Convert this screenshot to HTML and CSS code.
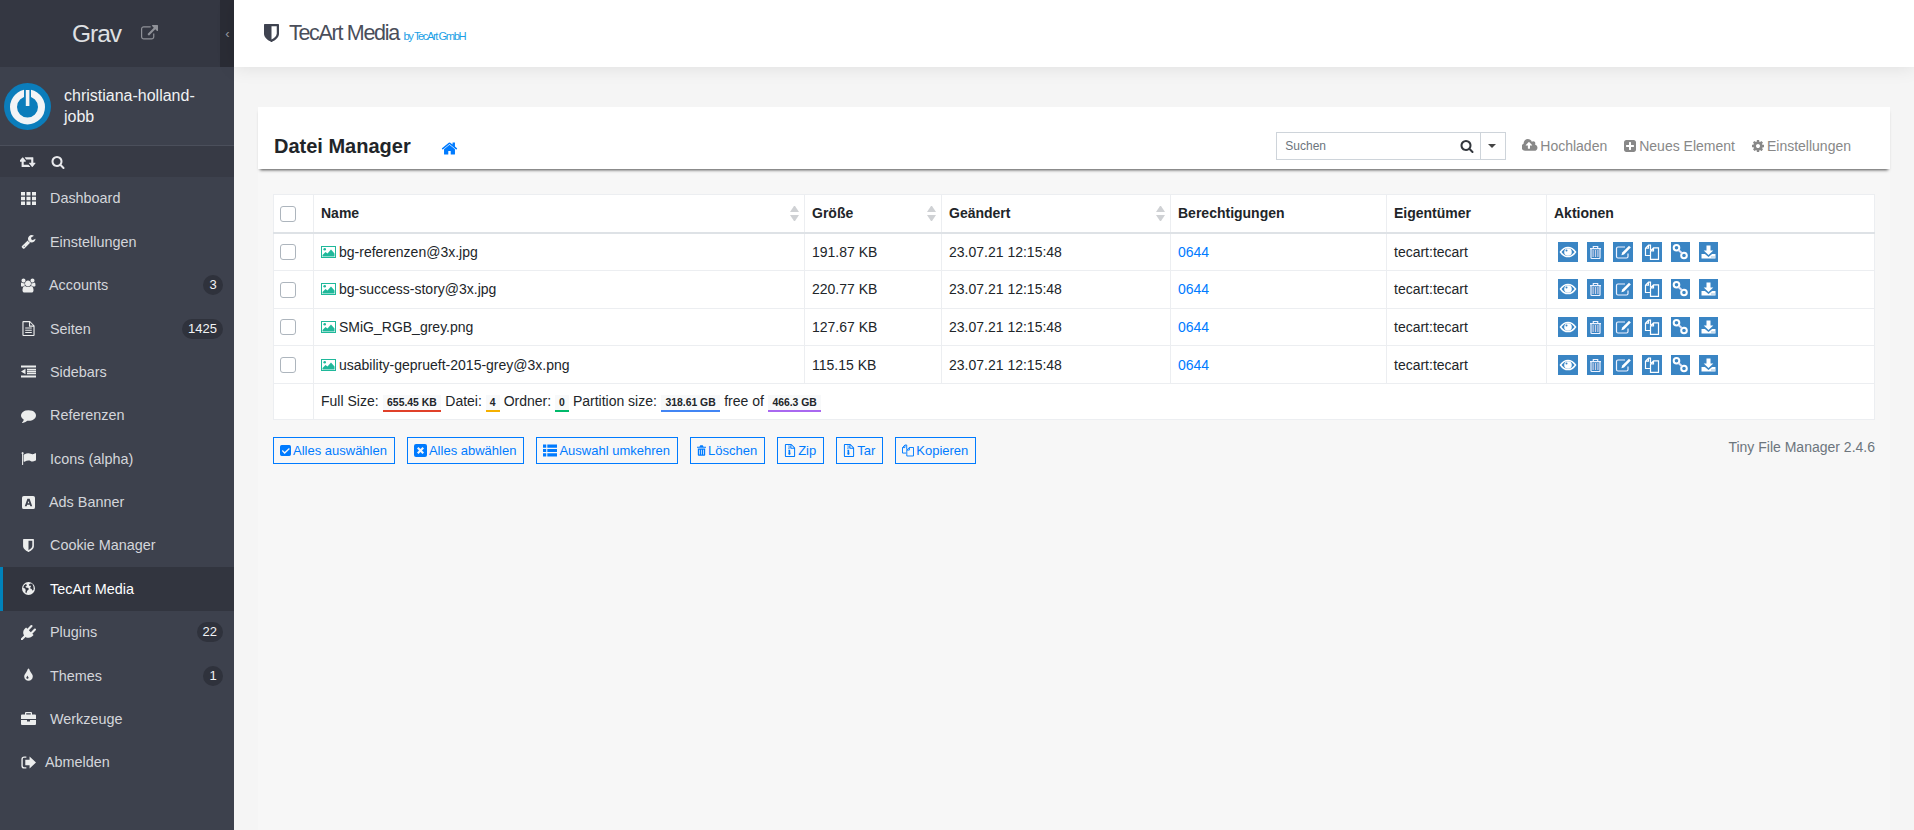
FILE: index.html
```html
<!DOCTYPE html>
<html lang="de">
<head>
<meta charset="utf-8">
<title>TecArt Media</title>
<link rel="stylesheet" href="styles.css">
</head>
<body>
<svg class="sprite" xmlns="http://www.w3.org/2000/svg">
<symbol id="i-ext" viewBox="0 0 1792 1792"><path d="M1408 928v320q0 119-84.500 203.500t-203.500 84.500h-832q-119 0-203.500-84.500t-84.500-203.500v-832q0-119 84.500-203.500t203.500-84.500h704q14 0 23 9t9 23v64q0 14-9 23t-23 9h-704q-66 0-113 47t-47 113v832q0 66 47 113t113 47h832q66 0 113-47t47-113v-320q0-14 9-23t23-9h64q14 0 23 9t9 23zm384-864v512q0 26-19 45t-45 19-45-19l-176-176-652 652q-10 10-23 10t-23-10l-114-114q-10-10-10-23t10-23l652-652-176-176q-19-19-19-45t19-45 45-19h512q26 0 45 19t19 45z"/></symbol>
<symbol id="i-shield" viewBox="256 128 1280 1536"><path d="M1344 960v-640h-448v1137q119-63 213-137 235-184 235-360zm192-768v768q0 86-33.500 170.500t-83 150-118 127.500-126.500 103-121 77.500-89.500 49.500-42.500 20q-12 6-26 6t-26-6q-16-7-42.500-20t-89.500-49.500-121-77.500-126.500-103-118-127.500-83-150-33.500-170.500v-768q0-26 19-45t45-19h1152q26 0 45 19t19 45z"/></symbol>
<symbol id="i-home" viewBox="0 0 1792 1792"><path d="M1472 992v480q0 26-19 45t-45 19h-384v-384h-256v384h-384q-26 0-45-19t-19-45v-480q0-1 .5-3t.5-3l575-474 575 474q1 2 1 6zm223-69l-62 74q-8 9-21 11h-3q-13 0-21-7l-692-577-692 577q-12 8-24 7-13-2-21-11l-62-74q-8-10-7-23.500t11-21.500l719-599q32-26 76-26t76 26l244 204v-195q0-14 9-23t23-9h192q14 0 23 9t9 23v408l219 182q10 8 11 21.500t-7 23.500z"/></symbol>
<symbol id="i-search" viewBox="0 0 1792 1792"><path d="M1216 832q0-185-131.500-316.500t-316.500-131.500-316.500 131.500-131.500 316.500 131.500 316.500 316.500 131.500 316.500-131.500 131.500-316.500zm512 832q0 52-38 90t-90 38q-54 0-90-38l-343-342q-179 124-399 124-143 0-273.500-55.500t-225-150-150-225-55.500-273.500 55.500-273.500 150-225 225-150 273.500-55.500 273.500 55.500 225 150 150 225 55.500 273.500q0 220-124 399l343 343q37 37 37 90z"/></symbol>
<symbol id="i-upload" viewBox="0 0 1920 1792"><path d="M1216 864q0-14-9-23l-352-352q-9-9-23-9t-23 9l-351 351q-10 12-10 24 0 14 9 23t23 9h224v352q0 13 9.500 22.500t22.500 9.500h192q13 0 22.500-9.500t9.500-22.500v-352h224q13 0 22.500-9.500t9.500-22.500zm640 288q0 159-112.500 271.500t-271.500 112.500h-1088q-185 0-316.500-131.500t-131.500-316.500q0-130 70-240t188-165q-2-30-2-43 0-212 150-362t362-150q156 0 285.500 87t188.500 231q71-62 166-62 106 0 181 75t75 181q0 76-41 138 130 31 213.500 135.500t83.500 238.500z"/></symbol>
<symbol id="i-plus" viewBox="0 0 1792 1792"><path d="M1408 960v-128q0-26-19-45t-45-19h-320v-320q0-26-19-45t-45-19h-128q-26 0-45 19t-19 45v320h-320q-26 0-45 19t-19 45v128q0 26 19 45t45 19h320v320q0 26 19 45t45 19h128q26 0 45-19t19-45v-320h320q26 0 45-19t19-45zm256-544v960q0 119-84.500 203.500t-203.500 84.500h-960q-119 0-203.500-84.500t-84.500-203.500v-960q0-119 84.500-203.500t203.500-84.500h960q119 0 203.500 84.500t84.500 203.500z"/></symbol>
<symbol id="i-cog" viewBox="0 0 1792 1792"><path d="M1152 896q0-106-75-181t-181-75-181 75-75 181 75 181 181 75 181-75 75-181zm512-109v222q0 12-8 23t-20 13l-185 28q-19 54-39 91 35 50 107 138 10 12 10 25t-9 23q-27 37-99 108t-94 71q-12 0-26-9l-138-108q-44 23-91 38-16 136-29 186-7 28-36 28h-222q-14 0-24.500-8.500t-11.500-21.500l-28-184q-49-16-90-37l-141 107q-10 9-25 9-14 0-25-11-126-114-165-168-7-10-7-23 0-12 8-23 15-21 51-66.500t54-70.500q-27-50-41-99l-183-27q-13-2-21-12.500t-8-23.500v-222q0-12 8-23t19-13l186-28q14-46 39-92-40-57-107-138-10-12-10-24 0-10 9-23 26-36 98.500-107.500t94.500-71.500q13 0 26 10l138 107q44-23 91-38 16-136 29-186 7-28 36-28h222q14 0 24.500 8.500t11.500 21.500l28 184q49 16 90 37l142-107q9-9 24-9 13 0 25 10 129 119 165 170 7 8 7 22 0 12-8 23-15 21-51 66.500t-54 70.500q26 50 41 98l183 28q13 2 21 12.500t8 23.500z"/></symbol>
<symbol id="i-wrench" viewBox="0 0 1792 1792"><path d="M448 1472q0-26-19-45t-45-19-45 19-19 45 19 45 45 19 45-19 19-45zm644-420l-682 682q-37 37-90 37-52 0-91-37l-106-108q-38-36-38-90 0-53 38-91l681-681q39 98 114.500 173.500t173.500 114.500zm634-435q0 39-23 106-47 134-164.500 217.500t-258.500 83.500q-185 0-316.500-131.500t-131.500-316.500 131.500-316.500 316.500-131.500q58 0 121.500 16.500t107.500 46.500q16 11 16 28t-16 28l-293 169v224l193 107q5-3 79-48.500t135.500-81 70.500-35.500q15 0 23.500 10t8.500 25z"/></symbol>
<symbol id="i-users" viewBox="0 0 1920 1792"><path d="M529 896q-162 5-265 128h-134q-82 0-138-40.500t-56-118.500q0-353 124-353 6 0 43.500 21t97.500 42.500 119 21.500q67 0 133-23-5 37-5 66 0 139 81 256zm1071 637q0 120-73 189.500t-194 69.500h-874q-121 0-194-69.500t-73-189.500q0-53 3.500-103.500t14-109 26.500-108.500 43-97.500 62-81 85.500-53.500 111.500-20q10 0 43 21.500t73 48 107 48 135 21.500 135-21.500 107-48 73-48 43-21.500q61 0 111.500 20t85.500 53.500 62 81 43 97.500 26.500 108.500 14 109 3.500 103.500zm-1024-1277q0 106-75 181t-181 75-181-75-75-181 75-181 181-75 181 75 75 181zm704 384q0 159-112.500 271.500t-271.500 112.500-271.500-112.500-112.500-271.500 112.500-271.500 271.500-112.500 271.500 112.500 112.500 271.500zm576 225q0 78-56 118.500t-138 40.500h-134q-103-123-265-128 81-117 81-256 0-29-5-66 66 23 133 23 59 0 119-21.500t97.500-42.500 43.500-21q124 0 124 353zm-128-609q0 106-75 181t-181 75-181-75-75-181 75-181 181-75 181 75 75 181z"/></symbol>
<symbol id="i-comment" viewBox="0 0 1792 1792"><path d="M1792 896q0 174-120 321.500t-326 233-450 85.500q-70 0-145-8-198 175-460 242-49 14-114 22-17 2-30.500-9t-17.500-29v-1q-3-4-.5-12t2-10 4.500-9.500l6-9 7-8.500 8-9q7-8 31-34.500t34.500-38 31-39.500 32.500-51 27-59 26-76q-157-89-247.500-220t-90.500-281q0-130 71-248.500t191-204.500 286-136.500 348-50.500q244 0 450 85.500t326 233 120 321.500z"/></symbol>
<symbol id="i-tint" viewBox="0 0 1792 1792"><path d="M896 1152q0-36-20-69-1-1-15.500-22.500t-25.500-38-25-44-21-50.500q-4-16-21-16t-21 16q-7 23-21 50.500t-25 44-25.500 38-15.500 22.500q-20 33-20 69 0 53 37.500 90.500t90.500 37.500 90.500-37.500 37.500-90.500zm512-128q0 212-150 362t-362 150-362-150-150-362q0-145 81-275 6-9 62.500-90.500t101-151 99.500-178 83-201.500q9-30 34-47t51-17 51.500 17 33.500 47q28 93 83 201.500t99.500 178 101 151 62.500 90.500q81 127 81 275z"/></symbol>
<symbol id="i-plug" viewBox="0 0 1792 1792"><path d="M1755 453q37 38 37 90.500t-37 90.500l-401 400 150 150-160 160q-163 163-389.500 186.500t-411.500-100.500l-362 362h-181v-181l362-362q-124-185-100.500-411.500t186.500-389.500l160-160 150 150 400-401q38-37 91-37t90 37 37 90.500-37 90.500l-400 401 234 234 401-400q38-37 91-37t90 37z"/></symbol>
<symbol id="i-flag" viewBox="0 0 1792 1792"><path d="M320 256q0 72-64 110v1266q0 13-9.500 22.500t-22.500 9.500h-64q-13 0-22.500-9.500t-9.500-22.500v-1266q-64-38-64-110 0-53 37.500-90.500t90.500-37.500 90.500 37.500 37.500 90.500zm1472 64v763q0 25-12.500 38.500t-39.500 27.500q-215 116-369 116-61 0-123.500-22t-108.500-48-115.500-48-142.500-22q-192 0-464 146-17 9-33 9-26 0-45-19t-19-45v-742q0-32 31-55 21-14 79-43 236-120 421-120 107 0 200 29t219 88q38 19 88 19 54 0 117.500-21t110-47 88-47 54.500-21q26 0 45 19t19 45z"/></symbol>
<symbol id="i-retweet" viewBox="0 0 1920 1792"><path d="M1216 1520q0 13-9.500 22.500t-22.500 9.500h-960q-8 0-13.500-2t-9-7-5.500-8-3-11.500-1-11.500v-600h-192q-26 0-45-19t-19-45q0-24 15-41l320-384q19-22 49-22t49 22l320 384q15 17 15 41 0 26-19 45t-45 19h-192v384h576q16 0 25 11l160 192q7 10 7 21zm640-416q0 24-15 41l-320 384q-20 23-49 23t-49-23l-320-384q-15-17-15-41 0-26 19-45t45-19h192v-384h-576q-16 0-25-12l-160-192q-7-9-7-20 0-13 9.500-22.500t22.500-9.500h960q8 0 13.500 2t9 7 5.500 8 3 11.500 1 11.500v600h192q26 0 45 19t19 45z"/></symbol>
<symbol id="i-th" viewBox="0 0 15 13"><path d="M0 0h4v3.500H0zM5.500 0h4v3.500h-4zM11 0h4v3.500h-4zM0 4.750h4v3.500H0zM5.500 4.750h4v3.500h-4zM11 4.750h4v3.500h-4zM0 9.500h4V13H0zM5.500 9.500h4V13h-4zM11 9.500h4V13h-4z"/></symbol>
<symbol id="i-file" viewBox="0 0 13 16"><path fill-rule="evenodd" d="M1 0h7l5 5v10a1 1 0 0 1-1 1H1a1 1 0 0 1-1-1V1a1 1 0 0 1 1-1zm.2 1.200v13.600h10.600V6H7V1.200zM8.200 1.600V4.800h3.200zM3 7h7v1.100H3zM3 9.300h7v1.100H3zM3 11.600h7v1.100H3z"/></symbol>
<symbol id="i-sidebars" viewBox="0 0 15 12"><path d="M0 0h15v2H0zM0 10h15v2H0zM6 3.300h9v1.400H6zM6 5.300h9v1.400H6zM6 7.300h9v1.400H6zM4.500 3.200v5.600L0 6z"/></symbol>
<symbol id="i-ads" viewBox="0 0 14 14"><path fill-rule="evenodd" d="M2 0h10a2 2 0 0 1 2 2v10a2 2 0 0 1-2 2H2a2 2 0 0 1-2-2V2a2 2 0 0 1 2-2zm3.800 3L3 11h2l.5-1.600h3L9 11h2L8.200 3zM7 5.300l.9 2.600H6.100z"/></symbol>
<symbol id="i-globe" viewBox="0 0 14 14"><path fill-rule="evenodd" d="M7 0a7 7 0 1 1 0 14A7 7 0 0 1 7 0zM4.500 1.800L2 3.800l-.6 2.700 2 .6.600 1.700-.4 2.300 1.100 1 .9-2.800 1.600-1.200-.2-1.700L4.300 6l-.6-1.300 1.500-.4zM9 1.500L7.200 3l1.200 1.300 1-.5.200 1.600L8.400 6.500l1.900 1.100 1.300 1.900.9-1.500-.1-3-1.300-3.100z"/></symbol>
<symbol id="i-brief" viewBox="0 0 15 13"><path fill-rule="evenodd" d="M5 0h5a1 1 0 0 1 1 1v1.500h3a1 1 0 0 1 1 1V7H0V3.500a1 1 0 0 1 1-1h3V1a1 1 0 0 1 1-1zm.2 1.200v1.300h4.600V1.200zM0 8h6v1.500h3V8h6v4a1 1 0 0 1-1 1H1a1 1 0 0 1-1-1z"/></symbol>
<symbol id="i-signout" viewBox="0 0 14 12"><path d="M5 1H3a2 2 0 0 0-2 2v6a2 2 0 0 0 2 2h2" fill="none" stroke="currentColor" stroke-width="1.300"/><path d="M8 0.500L14 6l-6 5.500V8.500H4v-5h4z"/></symbol>
<symbol id="i-image" viewBox="0 0 15 12"><path fill-rule="evenodd" d="M0 0h15v12H0zM1 1v10h13V1z"/><path d="M1.500 10.500V9l3-3 2 1.500 3.500-4 3.500 4v3z"/><circle cx="3.700" cy="3.300" r="1.300"/></symbol>
<symbol id="b-check" viewBox="0 0 13 13"><path fill-rule="evenodd" d="M2 0h9a2 2 0 0 1 2 2v9a2 2 0 0 1-2 2H2a2 2 0 0 1-2-2V2a2 2 0 0 1 2-2zm8.600 3.500L5.500 8.300 3.200 6 2.200 7.200l3.300 3.300 6.100-5.900z"/></symbol>
<symbol id="b-times" viewBox="0 0 13 13"><path fill-rule="evenodd" d="M2 0h9a2 2 0 0 1 2 2v9a2 2 0 0 1-2 2H2a2 2 0 0 1-2-2V2a2 2 0 0 1 2-2zm2.500 3L3 4.500l2 2-2 2L4.500 10l2-2 2 2L10 8.500l-2-2 2-2L8.500 3l-2 2z"/></symbol>
<symbol id="b-list" viewBox="0 0 13 11"><path d="M0 0h3v3H0zM4 0h9v3H4zM0 4h3v3H0zM4 4h9v3H4zM0 8h3v3H0zM4 8h9v3H4z"/></symbol>
<symbol id="b-trash" viewBox="0 0 11 13"><path fill-rule="evenodd" d="M4 0h3l1 2h3v1.200H0V2h3zM1 4h9v8a1 1 0 0 1-1 1H2a1 1 0 0 1-1-1zm1.800 1.500v6h.9v-6zm2.300 0v6H6v-6zm2.300 0v6h.9v-6z"/></symbol>
<symbol id="b-zip" viewBox="0 0 11 14"><path fill-rule="evenodd" d="M1 0h6l4 4v9a1 1 0 0 1-1 1H1a1 1 0 0 1-1-1V1a1 1 0 0 1 1-1zm.1 1.100v11.800h8.800V5H6V1.100zM7 1.400V4h2.600zM3.700 1.500h1.300v1.100H3.700zM5 2.700h1.100v1.100H5zM3.700 3.900h1.300V5H3.700zM3.700 6.200h2v2.300l.4 2a1.200 1.200 0 1 1-2.500 0l.4-2z"/></symbol>
<symbol id="b-copy" viewBox="0 0 14 14"><path fill="none" stroke="currentColor" stroke-width="1.100" d="M5.500 6V.6H3.400L.6 3.600V10h4.200M3.400.6v3H.6M5.600 6.500l3-3h4.800v9.900H5.600zM8.600 3.500v3h-3"/></symbol>
<symbol id="a-eye" viewBox="0 0 20 20"><path fill="none" stroke="#fff" stroke-width="1.500" d="M2.500 10c2-3 4.600-4.600 7.500-4.600s5.500 1.600 7.500 4.600c-2 3-4.600 4.600-7.500 4.600S4.500 13 2.500 10z"/><circle cx="10" cy="10" r="3.800" fill="#fff"/><circle cx="8.500" cy="8.600" r="1" fill="#3a85c4"/></symbol>
<symbol id="a-trash" viewBox="0 0 17 20"><path fill="none" stroke="#eef2ff" stroke-width="1.200" d="M3 6.600h11M6.300 6.300V4.500h4.400v1.800M4 6.600v9.100a.8.800 0 0 0 .8.800h7.400a.8.800 0 0 0 .8-.8V6.600"/><path fill="#c9cfe8" d="M5.500 8h1.200v7H5.500zM7.900 8h1.200v7H7.900zM10.300 8h1.200v7h-1.200z"/></symbol>
<symbol id="a-edit" viewBox="0 0 20 20"><path fill="none" stroke="#eef2ff" stroke-width="1.200" d="M15 11.500v3a1.500 1.500 0 0 1-1.500 1.500H5a1.500 1.500 0 0 1-1.500-1.500V6.500A1.500 1.500 0 0 1 5 5h7"/><path fill="#fff" d="M16 3.800l1.800 1.800-6.800 6.800-2.600.8.800-2.600z"/></symbol>
<symbol id="a-copy" viewBox="0 0 20 20"><path fill="none" stroke="#fff" stroke-width="1.200" d="M8.500 8V3.200H6.500L3.500 6.200v7.300H8M6.500 3.200v3h-3M8.500 8.800l3-3h5v11.500h-8zM11.500 5.800v3h-3"/></symbol>
<symbol id="a-link" viewBox="0 0 19 20"><g fill="none" stroke="#fff" stroke-width="2"><circle cx="5.500" cy="5.800" r="2.800"/><circle cx="13" cy="13.500" r="2.800"/></g><path fill="none" stroke="#dfe6fa" stroke-width="2" d="M7.500 8l3.500 3.300"/></symbol>
<symbol id="a-down" viewBox="0 0 19 20"><path fill="#fff" d="M7.500 3.500h4v5h2.800L9.500 13 4.700 8.500h2.800zM2.500 12h3.400l3.600 3 3.600-3h3.400v4.500h-14z"/><path fill="#3a85c4" d="M12.500 14.500h1v1h-1zM14.500 14.500h1v1h-1z"/></symbol>
</svg>

<div class="app">
  <aside class="sidebar">
    <div class="brand">
      <div class="brand-name"><span class="grav">Grav</span><svg class="ic-ext"><use href="#i-ext"/></svg></div>
      <div class="collapse">‹</div>
    </div>
    <div class="user">
      <svg class="avatar" viewBox="0 0 47 47">
        <circle cx="23.500" cy="23.500" r="23.500" fill="#0b7dbb"/>
        <circle cx="23.500" cy="24" r="14" fill="none" stroke="#f2f4f6" stroke-width="7"/>
        <rect x="20" y="5" width="7" height="15" fill="#0b7dbb"/>
        <rect x="21.800" y="7" width="3.600" height="16" fill="#f2f4f6"/>
      </svg>
      <div class="user-name">christiana-holland-jobb</div>
    </div>
    <div class="tools">
      <svg class="t-retweet"><use href="#i-retweet"/></svg>
      <svg class="t-search"><use href="#i-search"/></svg>
    </div>
    <nav class="menu">
      <a class="item"><svg class="ic"><use href="#i-th"/></svg><span>Dashboard</span></a>
      <a class="item"><svg class="ic"><use href="#i-wrench"/></svg><span>Einstellungen</span></a>
      <a class="item narrow"><svg class="ic"><use href="#i-users"/></svg><span>Accounts</span><b class="badge">3</b></a>
      <a class="item"><svg class="ic"><use href="#i-file"/></svg><span>Seiten</span><b class="badge">1425</b></a>
      <a class="item"><svg class="ic"><use href="#i-sidebars"/></svg><span>Sidebars</span></a>
      <a class="item"><svg class="ic"><use href="#i-comment"/></svg><span>Referenzen</span></a>
      <a class="item"><svg class="ic"><use href="#i-flag"/></svg><span>Icons (alpha)</span></a>
      <a class="item narrow"><svg class="ic ic-s"><use href="#i-ads"/></svg><span>Ads Banner</span></a>
      <a class="item"><svg class="ic ic-s"><use href="#i-shield"/></svg><span>Cookie Manager</span></a>
      <a class="item active"><svg class="ic ic-s"><use href="#i-globe"/></svg><span>TecArt Media</span></a>
      <a class="item"><svg class="ic"><use href="#i-plug"/></svg><span>Plugins</span><b class="badge">22</b></a>
      <a class="item"><svg class="ic"><use href="#i-tint"/></svg><span>Themes</span><b class="badge">1</b></a>
      <a class="item"><svg class="ic"><use href="#i-brief"/></svg><span>Werkzeuge</span></a>
      <a class="item logout"><svg class="ic ic-s"><use href="#i-signout"/></svg><span>Abmelden</span></a>
    </nav>
  </aside>

  <main class="main">
    <header class="topbar">
      <svg class="top-shield"><use href="#i-shield"/></svg>
      <h1 class="top-title">TecArt Media <small>by TecArt GmbH</small></h1>
    </header>
    <div class="content">
      <section class="card">
        <div class="card-head">
          <h2 class="card-title">Datei Manager</h2>
          <svg class="home"><use href="#i-home"/></svg>
          <div class="head-right">
            <div class="searchbox">
              <span class="placeholder">Suchen</span>
              <svg class="s-icon"><use href="#i-search"/></svg>
              <span class="s-caret"></span>
            </div>
            <a class="act"><svg class="act-up"><use href="#i-upload"/></svg>Hochladen</a>
            <a class="act"><svg class="act-ic"><use href="#i-plus"/></svg>Neues Element</a>
            <a class="act"><svg class="act-ic"><use href="#i-cog"/></svg>Einstellungen</a>
          </div>
        </div>
        <div class="card-body">
          <table class="files">
            <colgroup><col class="c1"><col class="c2"><col class="c3"><col class="c4"><col class="c5"><col class="c6"><col class="c7"></colgroup>
            <thead>
              <tr>
                <th><input type="checkbox" class="cb"></th>
                <th><div class="th-sort">Name<span class="sort"></span></div></th>
                <th><div class="th-sort">Größe<span class="sort"></span></div></th>
                <th><div class="th-sort">Geändert<span class="sort"></span></div></th>
                <th>Berechtigungen</th>
                <th>Eigentümer</th>
                <th>Aktionen</th>
              </tr>
            </thead>
            <tbody>
              <tr>
                <td><input type="checkbox" class="cb"></td>
                <td><svg class="img"><use href="#i-image"/></svg>bg-referenzen@3x.jpg</td>
                <td>191.87 KB</td><td>23.07.21 12:15:48</td><td><a class="perm">0644</a></td><td>tecart:tecart</td>
                <td><div class="actions"><svg class="ab"><use href="#a-eye"/></svg><svg class="ab nar"><use href="#a-trash"/></svg><svg class="ab"><use href="#a-edit"/></svg><svg class="ab"><use href="#a-copy"/></svg><svg class="ab nar2"><use href="#a-link"/></svg><svg class="ab nar2"><use href="#a-down"/></svg></div></td>
              </tr>
              <tr>
                <td><input type="checkbox" class="cb"></td>
                <td><svg class="img"><use href="#i-image"/></svg>bg-success-story@3x.jpg</td>
                <td>220.77 KB</td><td>23.07.21 12:15:48</td><td><a class="perm">0644</a></td><td>tecart:tecart</td>
                <td><div class="actions"><svg class="ab"><use href="#a-eye"/></svg><svg class="ab nar"><use href="#a-trash"/></svg><svg class="ab"><use href="#a-edit"/></svg><svg class="ab"><use href="#a-copy"/></svg><svg class="ab nar2"><use href="#a-link"/></svg><svg class="ab nar2"><use href="#a-down"/></svg></div></td>
              </tr>
              <tr>
                <td><input type="checkbox" class="cb"></td>
                <td><svg class="img"><use href="#i-image"/></svg>SMiG_RGB_grey.png</td>
                <td>127.67 KB</td><td>23.07.21 12:15:48</td><td><a class="perm">0644</a></td><td>tecart:tecart</td>
                <td><div class="actions"><svg class="ab"><use href="#a-eye"/></svg><svg class="ab nar"><use href="#a-trash"/></svg><svg class="ab"><use href="#a-edit"/></svg><svg class="ab"><use href="#a-copy"/></svg><svg class="ab nar2"><use href="#a-link"/></svg><svg class="ab nar2"><use href="#a-down"/></svg></div></td>
              </tr>
              <tr>
                <td><input type="checkbox" class="cb"></td>
                <td><svg class="img"><use href="#i-image"/></svg>usability-geprueft-2015-grey@3x.png</td>
                <td>115.15 KB</td><td>23.07.21 12:15:48</td><td><a class="perm">0644</a></td><td>tecart:tecart</td>
                <td><div class="actions"><svg class="ab"><use href="#a-eye"/></svg><svg class="ab nar"><use href="#a-trash"/></svg><svg class="ab"><use href="#a-edit"/></svg><svg class="ab"><use href="#a-copy"/></svg><svg class="ab nar2"><use href="#a-link"/></svg><svg class="ab nar2"><use href="#a-down"/></svg></div></td>
              </tr>
              <tr class="summary">
                <td></td>
                <td colspan="6"><div class="stats">
                  <span>Full Size:</span><span class="tag red">655.45 KB</span>
                  <span>Datei:</span><span class="tag amber">4</span>
                  <span>Ordner:</span><span class="tag green">0</span>
                  <span>Partition size:</span><span class="tag blue">318.61 GB</span>
                  <span>free of</span><span class="tag purple">466.3 GB</span>
                </div></td>
              </tr>
            </tbody>
          </table>
          <div class="below">
            <div class="btns">
              <a class="btn"><svg class="bi w11"><use href="#b-check"/></svg>Alles auswählen</a>
              <a class="btn"><svg class="bi"><use href="#b-times"/></svg>Alles abwählen</a>
              <a class="btn"><svg class="bi w14"><use href="#b-list"/></svg>Auswahl umkehren</a>
              <a class="btn"><svg class="bi w9"><use href="#b-trash"/></svg>Löschen</a>
              <a class="btn"><svg class="bi w12"><use href="#b-zip"/></svg>Zip</a>
              <a class="btn"><svg class="bi w12"><use href="#b-zip"/></svg>Tar</a>
              <a class="btn"><svg class="bi w12"><use href="#b-copy"/></svg>Kopieren</a>
            </div>
            <div class="version">Tiny File Manager 2.4.6</div>
          </div>
        </div>
      </section>
    </div>
  </main>
</div>
</body>
</html>
```
FILE: styles.css
```css
* { box-sizing: border-box; }
html, body { margin: 0; height: 100%; overflow: hidden; }
body { font-family: "Liberation Sans", Arial, sans-serif; font-size: 14px; color: #212529; background: #f5f5f5; }
.sprite { display: none; }
svg { fill: currentColor; }

.app { display: flex; height: 830px; }

/* Sidebar */
.sidebar { width: 234px; flex: none; background: #3d414d; color: #d4d6db; display: flex; flex-direction: column; }
.brand { height: 67px; background: #343742; display: flex; flex: none; }
.brand-name { flex: 1; display: flex; align-items: center; justify-content: center; gap: 20px; padding-left: 10px; border-right: 1px solid #2a2c35; }
.grav { font-size: 24.500px; letter-spacing: -1px; color: #dfe0e3; }
.ic-ext { width: 17px; height: 17px; color: #8f9198; }
.collapse { width: 13px; flex: none; background: #2a2c35; color: #9a9ca3; font-size: 13px; display: flex; align-items: center; justify-content: center; }
.user { height: 79px; flex: none; display: flex; align-items: center; padding: 0 12px 0 4px; gap: 13px; border-bottom: 1px solid #4b4f5b; }
.avatar { width: 47px; height: 47px; flex: none; }
.user-name { font-size: 16px; line-height: 21px; color: #f0f1f3; width: 140px; }
.tools { height: 31px; flex: none; background: #373a45; display: flex; align-items: center; padding-left: 20px; gap: 15px; color: #e8e9ec; }
.t-retweet { width: 16px; height: 15px; }
.t-search { width: 14px; height: 14px; }

.menu { display: flex; flex-direction: column; margin-top: -.25px; }
.item { height: 43.380px; display: flex; align-items: center; padding: 0 11px 0 21px; color: #d4d6db; font-size: 14.400px; }
.item .ic { width: 15px; height: 15px; flex: none; margin-right: 14px; color: #eceded; }
.item .ic.ic-s { height: 13px; }
.item span { flex: 1; }
.item.narrow .ic { margin-right: 13px; }
.item.logout .ic { margin-right: 9px; }
.item.active { background: #32353f; color: #fff; box-shadow: inset 3px 0 0 #0082ba; }
.badge { font-weight: 400; font-size: 13px; min-width: 20px; height: 20px; line-height: 20px; padding: 0 6px; border-radius: 10px; background: #2f323c; color: #f2f3f5; text-align: center; flex: none; }

/* Main */
.main { flex: 1; min-width: 0; display: flex; flex-direction: column; }
.topbar { height: 67px; flex: none; background: #fff; display: flex; align-items: center; padding-left: 30px; box-shadow: 0 0 18px rgba(0,0,0,.1); position: relative; }
.top-shield { width: 15px; height: 18px; color: #3f4350; margin-right: 10px; margin-top: -2px; }
.top-title { margin: 0; font-size: 21.500px; font-weight: 400; color: #4a4e5a; letter-spacing: -1.300px; }
.top-title small { font-size: 11.200px; color: #1c9fe6; letter-spacing: -1.450px; }
.content { flex: 1; min-height: 0; padding: 40px 24px 0; }
.card { background: #f7f7f7; height: 100%; }

.card-head { height: 62px; background: #fff; display: flex; align-items: center; padding: 15px 39px 0 16px; box-shadow: 0 3px 3px -2px rgba(0,0,0,.7); position: relative; }
.card-title { margin: 2px 0 0; font-size: 20px; font-weight: 700; color: #212529; }
.home { width: 17px; height: 17px; color: #007bff; margin: 6px 0 0 30px; }
.head-right { margin-left: auto; display: flex; align-items: center; gap: 16px; }
.searchbox { width: 230px; height: 28px; border: 1px solid #ced4da; background: #fff; display: flex; align-items: center; padding-left: 8px; }
.placeholder { flex: 1; font-size: 12px; color: #6c757d; }
.s-icon { width: 14px; height: 14px; color: #33373d; margin-right: 6px; }
.s-caret { width: 25px; height: 26px; border-left: 1px solid #ced4da; position: relative; }
.s-caret::after { content: ""; position: absolute; left: 7px; top: 11px; border: 4.500px solid transparent; border-top-color: #444; border-bottom: 0; }
.act { font-size: 14px; color: #888; display: flex; align-items: center; gap: 2px; }
.act-up { width: 16px; height: 15px; }
.act-ic { width: 14px; height: 14px; }

.card-body { padding: 25px 16px 0 15px; }
.files { width: 1601px; table-layout: fixed; border-collapse: collapse; background: #fff; }
.c1 { width: 40px; } .c2 { width: 491px; } .c3 { width: 137px; } .c4 { width: 229px; } .c5 { width: 216px; } .c6 { width: 160px; } .c7 { width: 328px; }
.files th, .files td { border: 1px solid #eceef1; padding: 0 7px; text-align: left; vertical-align: middle; }
.files thead th { height: 38px; font-weight: 700; border-bottom: 2px solid #dee2e6; }
.files tbody td { height: 37.750px; }
.files .summary td { height: 36px; padding-top: 3px; }
.th-sort { display: flex; justify-content: space-between; align-items: center; margin-right: -2px; }
.sort { display: flex; flex-direction: column; gap: 3px; width: 9px; }
.sort::before, .sort::after { content: ""; display: block; border-left: 4.500px solid transparent; border-right: 4.500px solid transparent; }
.sort::before { border-bottom: 6px solid #cfd1d4; }
.sort::after { border-top: 6px solid #cfd1d4; }
.cb { appearance: none; -webkit-appearance: none; width: 16px; height: 16px; margin: 1px 0 0 -1px; background: #fff; border: 1px solid #adb5bd; border-radius: 3px; display: block; }
.img { width: 15px; height: 12px; color: #1fb89a; margin-right: 3px; vertical-align: -1px; }
.perm { color: #007bff; }
.actions { display: flex; gap: 9px; padding-left: 4px; align-items: center; }
.ab { width: 20px; height: 20px; background: #3a85c4; flex: none; }
.ab.nar { width: 17px; }
.ab.nar2 { width: 19px; }

.stats { display: flex; align-items: flex-start; gap: 4px; }
.stats > span:not(.tag) { line-height: 15px; }
.tag { font-size: 10.400px; font-weight: 700; line-height: 15px; padding: 0 4.500px; background: #f8f9fa; border-bottom: 2px solid; height: 17px; margin-top: 1px; }
.tag.red { border-color: #e0402a; }
.tag.amber { border-color: #f5b000; padding: 0 4px; }
.tag.green { border-color: #00b96b; padding: 0 4px; }
.tag.blue { border-color: #4285f4; }
.tag.purple { border-color: #a968f0; }

.below { display: flex; justify-content: space-between; padding-top: 17px; }
.btns { display: flex; gap: 12px; }
.btn { height: 27px; display: flex; align-items: center; gap: 2px; border: 1px solid #007bff; color: #007bff; font-size: 13px; padding: 0 7px 0 6px; }
.bi { width: 13px; height: 13px; flex: none; }
.bi.w9 { width: 9px; }
.bi.w11 { width: 11px; }
.bi.w12 { width: 12px; }
.bi.w14 { width: 14px; }
.version { color: #6c757d; font-size: 14px; line-height: 20px; margin-right: -1px; }
```
